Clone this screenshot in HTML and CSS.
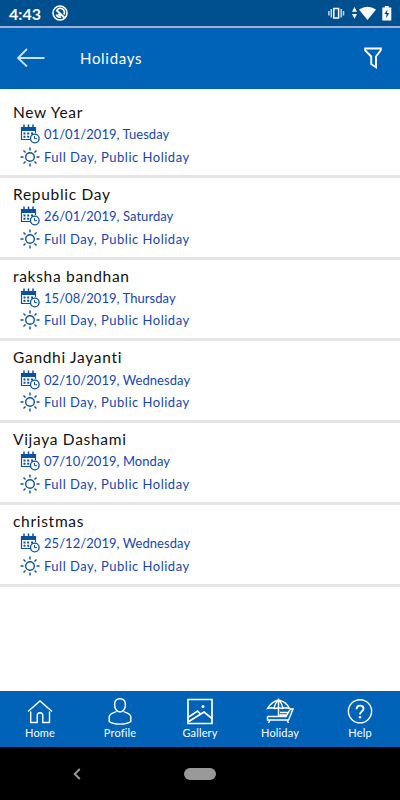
FILE: index.html
```html
<!DOCTYPE html>
<html lang="en">
<head>
  <meta charset="UTF-8" />
  <meta name="viewport" content="width=device-width, initial-scale=1.0" />
  <title>Holidays</title>
  <link rel="stylesheet" href="styles.css">
</head>
<body>
  <!-- Shared icons -->
  <svg class="sprite" width="0" height="0">
    <symbol id="calendar" viewBox="0 0 20 20">
      <path d="M1 3h15v4H1z" fill="currentColor" />
      <path d="M4 .5v4M8.500 .5v4M13 .5v4" stroke="currentColor" stroke-width="1.500" />
      <path d="M1.500 3v12.500H10M15.500 3v6" fill="none" stroke="currentColor" stroke-width="1.200" />
      <path d="M3.500 9.500h2M7.200 9.500h2M11 9.500h2M3.500 12.800h2M7.200 12.800h2" stroke="currentColor" stroke-width="2" />
      <circle cx="14.800" cy="14.500" r="4.300" fill="#fff" stroke="currentColor" stroke-width="1.300" />
      <path d="M14.500 12v2.700H17" fill="none" stroke="currentColor" />
    </symbol>
    <symbol id="sun" viewBox="0 0 20 20">
      <g fill="none" stroke="currentColor" stroke-width="1.400">
        <circle cx="10" cy="10" r="4.300" />
        <path d="M10 .5v3M10 16.500v3M.5 10h3M16.500 10h3M3.500 3.500l2 2M14.500 14.500l2 2M16.500 3.500l-2 2M5.500 14.500l-2 2" />
      </g>
    </symbol>
  </svg>

  <div class="status-bar">
    <span class="clock">4:43</span>
    <svg class="status-app" width="16" height="16" viewBox="0 0 16 16">
      <circle cx="8" cy="8" r="7" fill="none" stroke="#fff" stroke-width="1.600" />
      <path d="M4.300 9.500A4 4 0 0 0 9 12M5 5.200a4 4 0 0 1 6.800 4.300" fill="none" stroke="#fff" stroke-width="1.700" />
      <path d="M4.300 5l8 7.500M6 9l2.500 2" stroke="#fff" stroke-width="2" />
    </svg>
    <svg class="status-icons" width="64" height="16" viewBox="0 0 64 16">
      <path d="M5.800 3.500h4.800v9.500H5.800z" fill="none" stroke="#fff" stroke-width="1.500" />
      <path d="M3.300 4v8.500M13.200 4v8.500M.9 6v4.500M15.500 6v4.500" stroke="#c5d8ec" stroke-width="1.500" />
      <path d="M24 6.800h5L26.500 2zM24 9h5l-2.500 4.800z" fill="#fff" />
      <path d="M31 4.500q8.500-5.500 17 0L39.500 15z" fill="#fff" />
      <path d="M54.300 2.500h2.500V1h4v1.500h2.500v13h-9z" fill="#fff" />
      <path d="M59.500 4.500L56.300 9h2.200l-.5 4.500L61.300 8H59z" fill="#00508f" />
    </svg>
  </div>

  <div class="header">
    <svg class="back" width="28" height="20" viewBox="0 0 28 20">
      <path d="M27.500 10H1M10 1L1 10l9 8.500" fill="none" stroke="#c8e2fb" stroke-width="1.800" />
    </svg>
    <h1>Holidays</h1>
    <svg class="filter" width="18" height="22" viewBox="0 0 18 22">
      <path d="M1.200 1.500h15.600v1.800L12 9.500v10.700L7.200 17V9.500L1.200 3.300z" fill="none" stroke="#fff" stroke-width="1.900" />
    </svg>
  </div>

  <div class="holiday-list">
    <div class="holiday">
      <h2>New Year</h2>
      <p class="date"><svg><use href="#calendar" /></svg><span>01/01/2019, Tuesday</span></p>
      <p><svg><use href="#sun" /></svg><span>Full Day, Public Holiday</span></p>
    </div>
    <div class="holiday">
      <h2>Republic Day</h2>
      <p class="date"><svg><use href="#calendar" /></svg><span>26/01/2019, Saturday</span></p>
      <p><svg><use href="#sun" /></svg><span>Full Day, Public Holiday</span></p>
    </div>
    <div class="holiday">
      <h2>raksha bandhan</h2>
      <p class="date"><svg><use href="#calendar" /></svg><span>15/08/2019, Thursday</span></p>
      <p><svg><use href="#sun" /></svg><span>Full Day, Public Holiday</span></p>
    </div>
    <div class="holiday">
      <h2>Gandhi Jayanti</h2>
      <p class="date"><svg><use href="#calendar" /></svg><span>02/10/2019, Wednesday</span></p>
      <p><svg><use href="#sun" /></svg><span>Full Day, Public Holiday</span></p>
    </div>
    <div class="holiday">
      <h2>Vijaya Dashami</h2>
      <p class="date"><svg><use href="#calendar" /></svg><span>07/10/2019, Monday</span></p>
      <p><svg><use href="#sun" /></svg><span>Full Day, Public Holiday</span></p>
    </div>
    <div class="holiday">
      <h2>christmas</h2>
      <p class="date"><svg><use href="#calendar" /></svg><span>25/12/2019, Wednesday</span></p>
      <p><svg><use href="#sun" /></svg><span>Full Day, Public Holiday</span></p>
    </div>
  </div>

  <div class="tabs">
    <a class="tab">
      <svg viewBox="0 0 28 28">
        <path d="M2 14.500L14 4l12 10.500M4.700 14.500V25.500h6.500v-7a2.800 2.800 0 0 1 5.600 0v7h6.700V14.500" />
      </svg>
      <span>Home</span>
    </a>
    <a class="tab">
      <svg viewBox="0 0 28 28">
        <path d="M14 1.700c3.700 0 5.400 2.500 5.400 6s-1.900 7.300-5.400 7.300-5.400-3.800-5.400-7.300 1.700-6 5.400-6z" />
        <path d="M10.500 14.500c-3 1.700-7.300 2-7.300 5.500v4.500c4 3.500 17.600 3.500 21.600 0V20c0-3.500-4.300-3.800-7.300-5.500" />
      </svg>
      <span>Profile</span>
    </a>
    <a class="tab">
      <svg viewBox="0 0 28 28">
        <path d="M2 2.500h24v24H2z" stroke-width="1.700" />
        <path d="M2 20.500l9.500-6.500 3 3M2 25l16-10 8 6.500" stroke-width="1.700" />
        <circle cx="17" cy="9.500" r="1.500" class="dot" />
      </svg>
      <span>Gallery</span>
    </a>
    <a class="tab">
      <svg viewBox="0 0 28 28">
        <path d="M1.500 11.500C4.500 6.500 8 4 12.500 3c4.500 1 8.500 3.500 11 8.500l-3.700-.8-3.600.8-3.700-.8-3.700.8-3.700-.8zM12.500 1.500v17.500M8 11c.6-3 2.200-6 4.500-8 2.300 2 3.900 5 4.500 8" />
        <path d="M1.500 19.500H20L24.500 12H27l-4.500 11h-21v-3.500M4 23l-1.500 3M21 23l1.500 3M14 15.500h7.500M13.500 18h7" />
      </svg>
      <span>Holiday</span>
    </a>
    <a class="tab">
      <svg viewBox="0 0 28 28">
        <circle cx="14" cy="14.300" r="11.600" />
        <path d="M10.600 12.200c0-5 6.900-4.500 6.900-.5 0 2.800-3.500 2.600-3.500 5.800" stroke-width="1.900" />
        <circle cx="14" cy="20.300" r="1.300" class="dot" />
      </svg>
      <span>Help</span>
    </a>
  </div>

  <div class="system-nav">
    <svg class="nav-back" width="8" height="12" viewBox="0 0 8 12">
      <path d="M6.800 1L1.700 6l5.100 5" fill="none" stroke="#999" stroke-width="1.900" />
    </svg>
    <div class="nav-home"></div>
  </div>
</body>
</html>
```
FILE: styles.css
```css
* {
  box-sizing: border-box;
}
body {
  margin: 0;
  height: 800px;
  display: flex;
  flex-direction: column;
  overflow: hidden;
  background-color: #fff;
  font-family: Lato, "Open Sans", sans-serif;
}
h1, h2, p {
  margin: 0;
  font-weight: 400;
}
svg {
  flex: none;
}
.sprite {
  display: none;
}
.status-bar {
  height: 28px;
  display: flex;
  align-items: center;
  padding: 0 8px 0 9px;
  background-color: #00508f;
  border-bottom: 2px solid #a5b1d0;
  color: #fff;
}
.clock {
  width: 43px;
  font-family: Lato, sans-serif;
  font-size: 16px;
  font-weight: 700;
}
.status-icons {
  margin-left: auto;
}
.header {
  height: 61px;
  display: flex;
  align-items: center;
  padding: 0 18px 2px 17px;
  background-color: #0063b8;
  color: #fff;
}
.header h1 {
  margin-left: 35px;
  font-size: 15px;
  letter-spacing: 0.7px;
}
.filter {
  margin-left: auto;
}
.holiday-list {
  flex: 1;
  padding-top: 7px;
}
.holiday {
  height: 81.8px;
  padding: 5px 13px 0;
  border-bottom: 3px solid #e5e5e5;
}
.holiday h2 {
  height: 22px;
  line-height: 22px;
  font-size: 15.5px;
  letter-spacing: 0.7px;
  color: #111;
}
.holiday p {
  height: 22.6px;
  display: flex;
  align-items: center;
  gap: 4px;
  padding-left: 7px;
  font-size: 13px;
  letter-spacing: 0.5px;
  color: #1646b0;
}
.holiday .date {
  letter-spacing: 0.05px;
}
.holiday svg {
  width: 20px;
  height: 20px;
  color: #0b519f;
}
.tabs {
  height: 56px;
  display: flex;
  background-color: #0063b8;
}
.tab {
  flex: 1;
  display: flex;
  flex-direction: column;
  align-items: center;
  padding-top: 6px;
  font-size: 11px;
  line-height: 16px;
  letter-spacing: 0.15px;
  color: #fff;
}
.tab svg {
  width: 28px;
  height: 28px;
  fill: none;
  stroke: #fff;
  stroke-width: 1.4;
}
.tab .dot {
  fill: #fff;
  stroke: none;
}
.system-nav {
  height: 53px;
  display: grid;
  grid-template-columns: 153px 94px 153px;
  align-items: center;
  justify-items: center;
  background-color: #000;
}
.nav-home {
  width: 32px;
  height: 12px;
  border-radius: 6px;
  background-color: #999;
}
```
